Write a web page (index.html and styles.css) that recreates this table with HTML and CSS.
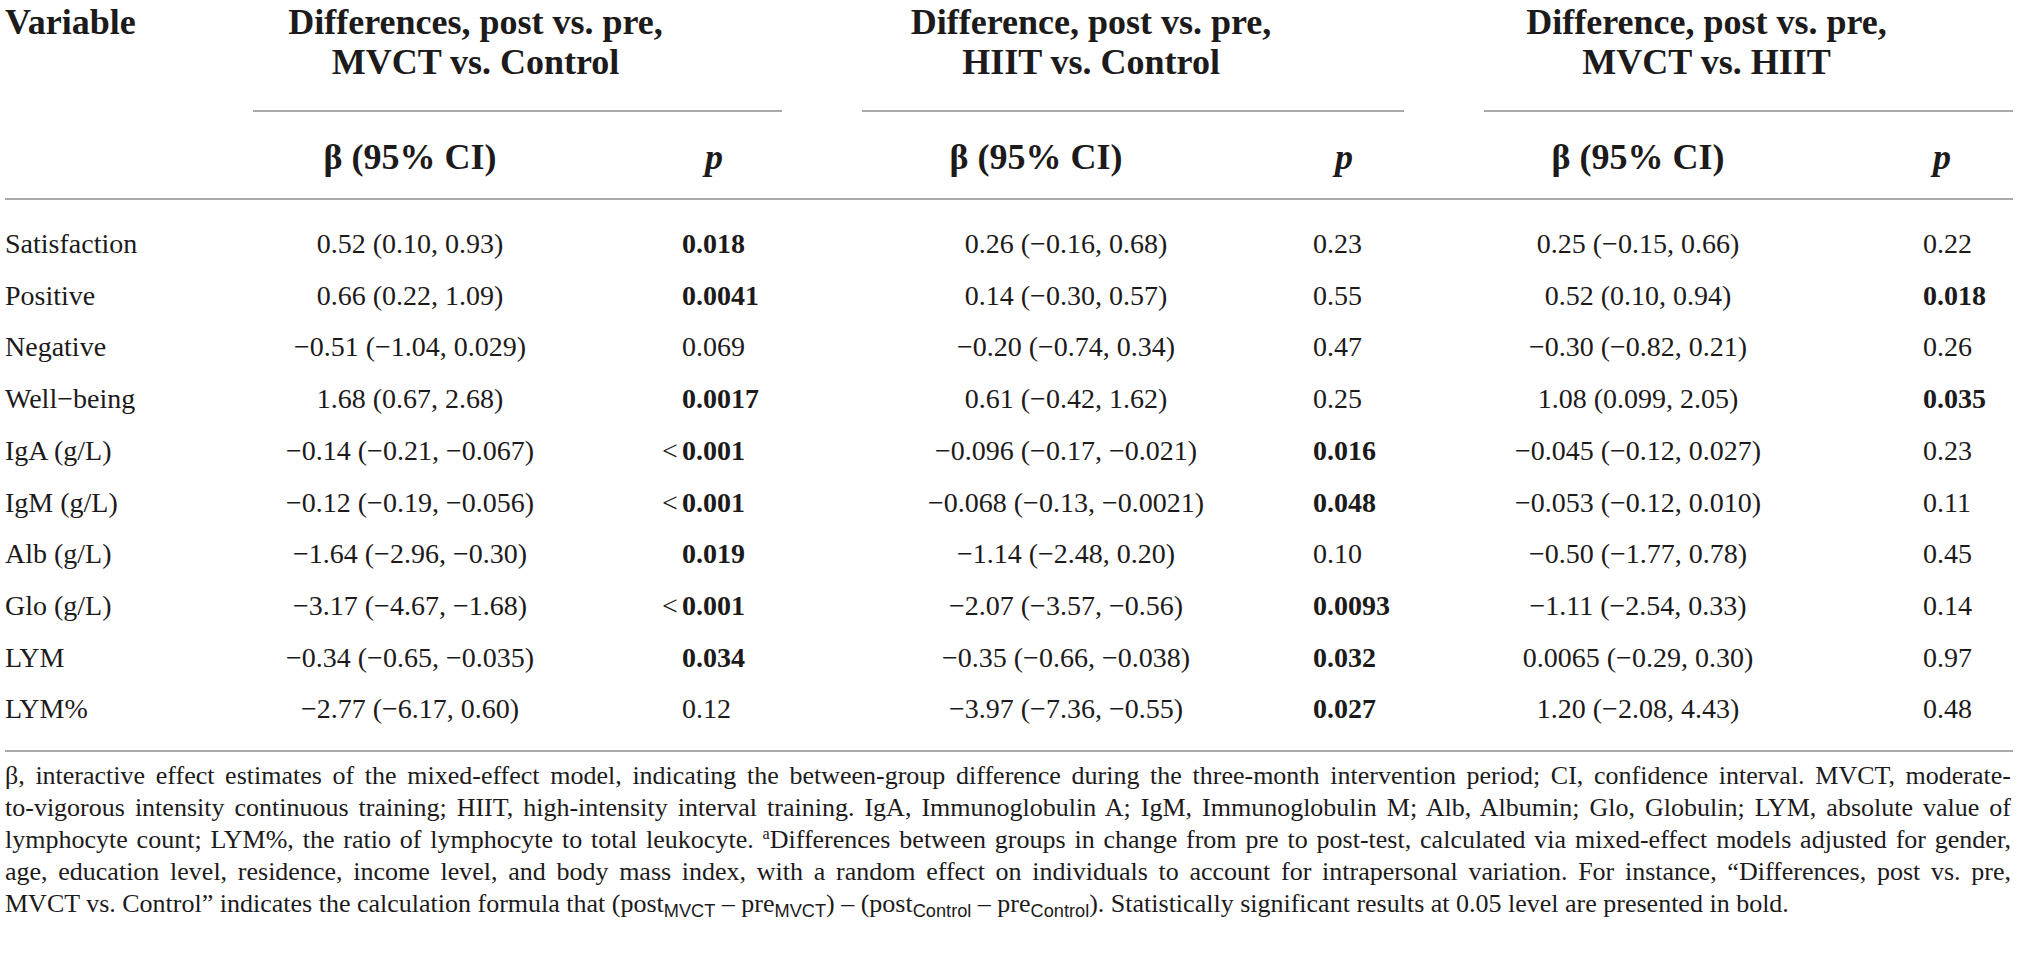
FILE: index.html
```html
<!DOCTYPE html>
<html lang="en">
<head>
<meta charset="utf-8">
<title>Table</title>
<link rel="stylesheet" href="styles.css">
</head>
<body>
<div class="page">
<table class="tbl">
  <colgroup>
    <col class="c-var">
    <col class="c-b1"><col class="c-p1">
    <col class="c-gap">
    <col class="c-b2"><col class="c-p2">
    <col class="c-gap">
    <col class="c-b3"><col class="c-p3">
  </colgroup>
  <thead>
    <tr class="hr1">
      <th class="h-var" rowspan="2">Variable</th>
      <th class="h-grp" colspan="2">Differences, post vs. pre,<br>MVCT vs. Control</th>
      <th class="h-gap" rowspan="2"></th>
      <th class="h-grp" colspan="2">Difference, post vs. pre,<br>HIIT vs. Control</th>
      <th class="h-gap" rowspan="2"></th>
      <th class="h-grp" colspan="2">Difference, post vs. pre,<br>MVCT vs. HIIT</th>
    </tr>
    <tr class="hr2">
      <th class="h-b h-b1">β (95% CI)</th><th class="h-p h-p1"><i>p</i></th>
      <th class="h-b h-b2">β (95% CI)</th><th class="h-p h-p2"><i>p</i></th>
      <th class="h-b h-b3">β (95% CI)</th><th class="h-p h-p3"><i>p</i></th>
    </tr>
  </thead>
  <tbody>
    <tr>
      <td class="v">Satisfaction</td>
      <td class="b b1">0.52 (0.10, 0.93)</td><td class="p p1"><b>0.018</b></td><td></td>
      <td class="b b2">0.26 (−0.16, 0.68)</td><td class="p p2">0.23</td><td></td>
      <td class="b b3">0.25 (−0.15, 0.66)</td><td class="p p3">0.22</td>
    </tr>
    <tr>
      <td class="v">Positive</td>
      <td class="b b1">0.66 (0.22, 1.09)</td><td class="p p1"><b>0.0041</b></td><td></td>
      <td class="b b2">0.14 (−0.30, 0.57)</td><td class="p p2">0.55</td><td></td>
      <td class="b b3">0.52 (0.10, 0.94)</td><td class="p p3"><b>0.018</b></td>
    </tr>
    <tr>
      <td class="v">Negative</td>
      <td class="b b1">−0.51 (−1.04, 0.029)</td><td class="p p1">0.069</td><td></td>
      <td class="b b2">−0.20 (−0.74, 0.34)</td><td class="p p2">0.47</td><td></td>
      <td class="b b3">−0.30 (−0.82, 0.21)</td><td class="p p3">0.26</td>
    </tr>
    <tr>
      <td class="v">Well−being</td>
      <td class="b b1">1.68 (0.67, 2.68)</td><td class="p p1"><b>0.0017</b></td><td></td>
      <td class="b b2">0.61 (−0.42, 1.62)</td><td class="p p2">0.25</td><td></td>
      <td class="b b3">1.08 (0.099, 2.05)</td><td class="p p3"><b>0.035</b></td>
    </tr>
    <tr>
      <td class="v">IgA (g/L)</td>
      <td class="b b1">−0.14 (−0.21, −0.067)</td><td class="p p1"><span class="lt">&lt;</span><b>0.001</b></td><td></td>
      <td class="b b2">−0.096 (−0.17, −0.021)</td><td class="p p2"><b>0.016</b></td><td></td>
      <td class="b b3">−0.045 (−0.12, 0.027)</td><td class="p p3">0.23</td>
    </tr>
    <tr>
      <td class="v">IgM (g/L)</td>
      <td class="b b1">−0.12 (−0.19, −0.056)</td><td class="p p1"><span class="lt">&lt;</span><b>0.001</b></td><td></td>
      <td class="b b2">−0.068 (−0.13, −0.0021)</td><td class="p p2"><b>0.048</b></td><td></td>
      <td class="b b3">−0.053 (−0.12, 0.010)</td><td class="p p3">0.11</td>
    </tr>
    <tr>
      <td class="v">Alb (g/L)</td>
      <td class="b b1">−1.64 (−2.96, −0.30)</td><td class="p p1"><b>0.019</b></td><td></td>
      <td class="b b2">−1.14 (−2.48, 0.20)</td><td class="p p2">0.10</td><td></td>
      <td class="b b3">−0.50 (−1.77, 0.78)</td><td class="p p3">0.45</td>
    </tr>
    <tr>
      <td class="v">Glo (g/L)</td>
      <td class="b b1">−3.17 (−4.67, −1.68)</td><td class="p p1"><span class="lt">&lt;</span><b>0.001</b></td><td></td>
      <td class="b b2">−2.07 (−3.57, −0.56)</td><td class="p p2"><b>0.0093</b></td><td></td>
      <td class="b b3">−1.11 (−2.54, 0.33)</td><td class="p p3">0.14</td>
    </tr>
    <tr>
      <td class="v">LYM</td>
      <td class="b b1">−0.34 (−0.65, −0.035)</td><td class="p p1"><b>0.034</b></td><td></td>
      <td class="b b2">−0.35 (−0.66, −0.038)</td><td class="p p2"><b>0.032</b></td><td></td>
      <td class="b b3">0.0065 (−0.29, 0.30)</td><td class="p p3">0.97</td>
    </tr>
    <tr>
      <td class="v">LYM%</td>
      <td class="b b1">−2.77 (−6.17, 0.60)</td><td class="p p1">0.12</td><td></td>
      <td class="b b2">−3.97 (−7.36, −0.55)</td><td class="p p2"><b>0.027</b></td><td></td>
      <td class="b b3">1.20 (−2.08, 4.43)</td><td class="p p3">0.48</td>
    </tr>
  </tbody>
</table>
<div class="notes">
  <span class="nl">β, interactive effect estimates of the mixed-effect model, indicating the between-group difference during the three-month intervention period; CI, confidence interval. MVCT, moderate-</span>
  <span class="nl">to-vigorous intensity continuous training; HIIT, high-intensity interval training. IgA, Immunoglobulin A; IgM, Immunoglobulin M; Alb, Albumin; Glo, Globulin; LYM, absolute value of</span>
  <span class="nl">lymphocyte count; LYM%, the ratio of lymphocyte to total leukocyte. <sup class="sup">a</sup>Differences between groups in change from pre to post-test, calculated via mixed-effect models adjusted for gender,</span>
  <span class="nl">age, education level, residence, income level, and body mass index, with a random effect on individuals to account for intrapersonal variation. For instance, “Differences, post vs. pre,</span>
  <span class="nl nl-last">MVCT vs. Control” indicates the calculation formula that (post<sub class="sub">MVCT</sub> – pre<sub class="sub">MVCT</sub>) – (post<sub class="sub">Control</sub> – pre<sub class="sub">Control</sub>). Statistically significant results at 0.05 level are presented in bold.</span>
</div>
</div>
</body>
</html>
```

FILE: styles.css
```css
html, body {
  margin: 0;
  padding: 0;
  background: #ffffff;
}

.page,
.page table,
.page th,
.page td,
.page b,
.page i,
.page span,
.page sup {
  font-family: "Liberation Serif", "Times New Roman", serif;
}

.page {
  width: 2021px;
  padding-left: 5px;
  box-sizing: border-box;
  color: #1c1a1b;
}

.tbl {
  width: 2008px;
  table-layout: fixed;
  border-collapse: collapse;
  border-spacing: 0;
}

.c-var { width: 248px; }
.c-b1 { width: 314px; }
.c-p1 { width: 215px; }
.c-gap { width: 80px; }
.c-b2 { width: 348px; }
.c-p2 { width: 194px; }
.c-b3 { width: 308px; }
.c-p3 { width: 221px; }

.tbl th {
  font-weight: bold;
  font-size: 36px;
  line-height: 40px;
  padding: 0;
  color: #1c1a1b;
}

.tbl thead {
  border-bottom: 2px solid #a9a9a9;
}

.tbl tbody {
  border-bottom: 2px solid #a9a9a9;
}

.h-var {
  text-align: left;
  vertical-align: top;
  padding-top: 2px !important;
}

.h-grp {
  text-align: center;
  vertical-align: top;
  padding: 2px 84px 28px 0 !important;
  border-bottom: 2px solid #a9a9a9;
}

.hr2 th {
  vertical-align: top;
  padding-top: 25px;
  padding-bottom: 21px;
}

.h-b { text-align: center; }
.h-p { text-align: left; }
.h-p1 { padding-left: 138px !important; }
.h-p2 { padding-left: 125px !important; }
.h-p3 { padding-left: 141px !important; }

.tbl td {
  font-size: 28px;
  line-height: 51.7px;
  padding: 0;
  white-space: nowrap;
  vertical-align: top;
}

.tbl tbody tr:first-child td { padding-top: 18px; }
.tbl tbody tr:last-child td { padding-bottom: 15px; }

.v { text-align: left; }
.b { text-align: center; }
.b2 { padding-left: 60px !important; }
.p { text-align: left; }
.p1 { padding-left: 115px !important; }
.p2 { padding-left: 103px !important; }
.p3 { padding-left: 131px !important; }

.lt {
  display: inline-block;
  width: 20px;
  margin-left: -20px;
  text-align: left;
}

.notes {
  width: 2006px;
  padding-top: 8px;
  font-size: 26px;
  line-height: 32px;
  color: #1c1a1b;
}

.nl {
  display: block;
  text-align: justify;
  text-align-last: justify;
  white-space: nowrap;
}

.nl-last {
  text-align: left;
  text-align-last: left;
}

.sup {
  font-size: 0.62em;
  line-height: 0;
  vertical-align: 0.55em;
}

.page .sub {
  font-family: "Liberation Sans", Arial, sans-serif;
  font-size: 0.7em;
  line-height: 0;
  vertical-align: -0.3em;
}
```
